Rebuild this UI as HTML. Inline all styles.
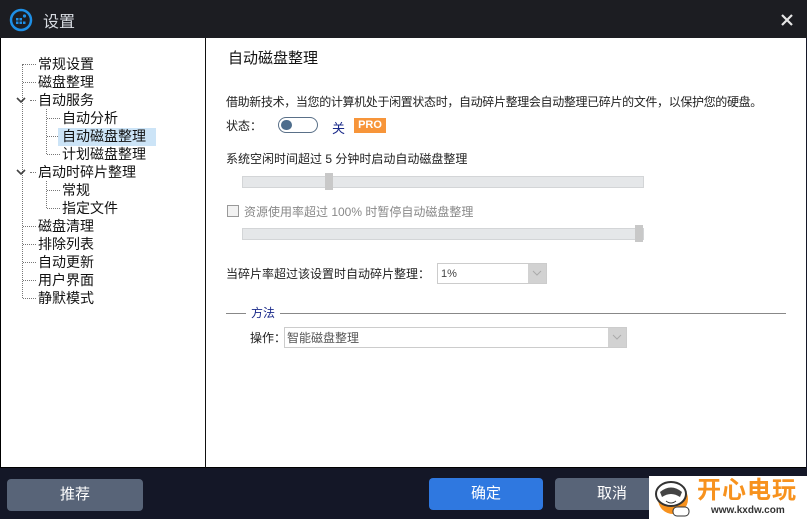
<!DOCTYPE html>
<html><head><meta charset="utf-8"><style>
*{margin:0;padding:0;box-sizing:border-box}
body{width:807px;height:519px;overflow:hidden;background:#141727;font-family:"Liberation Sans","Noto Sans CJK SC",sans-serif;position:relative}
.a{position:absolute;white-space:nowrap}
#tb{left:0;top:0;width:807px;height:38px;background:#1c1d22}
#main{left:0;top:38px;width:806px;height:430px;background:#fff;border-left:1px solid #000;border-bottom:1px solid #000}
#sep{left:205px;top:38px;width:1px;height:430px;background:#111}
.t{font-size:14px;color:#111;line-height:18px}
.r{font-size:12px;color:#222;line-height:16px}
.dv{border-left:1px dotted #777}
.dh{border-top:1px dotted #777;height:0}
.btn{height:32px;border-radius:4px;color:#fff;font-size:15px;text-align:center;line-height:32px}
</style></head><body>
<div class="a" id="tb"></div>
<svg class="a" style="left:9px;top:8px" width="24" height="24" viewBox="0 0 24 24"><circle cx="12" cy="12" r="10" fill="none" stroke="#1e8fe6" stroke-width="2.5"/><g fill="#1e8fe6"><rect x="7" y="10" width="2.5" height="2.5"/><rect x="10.5" y="10" width="2.5" height="2.5"/><rect x="7" y="13.5" width="2.5" height="2.5"/><rect x="10.5" y="13.5" width="2.5" height="2.5"/><rect x="14" y="13.5" width="2.5" height="2.5"/><circle cx="15.5" cy="8" r="1.6"/></g></svg>
<div class="a" style="left:43px;top:8px;font-size:16px;color:#d8dce2">设置</div>
<svg class="a" style="left:780px;top:13px" width="14" height="14"><path d="M2 2L12 12M12 2L2 12" stroke="#e6e6e6" stroke-width="2.2"/></svg>
<div class="a" id="main"></div>
<div class="a" id="sep"></div>
<div class="a dv" style="left:22px;top:64px;height:234px"></div>
<div class="a dv" style="left:46px;top:109px;height:45px"></div>
<div class="a dv" style="left:46px;top:181px;height:27px"></div>
<div class="a dh" style="left:23px;top:64px;width:13px"></div>
<div class="a dh" style="left:23px;top:82px;width:13px"></div>
<div class="a dh" style="left:30px;top:100px;width:6px"></div>
<div class="a dh" style="left:47px;top:118px;width:13px"></div>
<div class="a dh" style="left:47px;top:136px;width:11px"></div>
<div class="a dh" style="left:47px;top:154px;width:13px"></div>
<div class="a dh" style="left:30px;top:172px;width:6px"></div>
<div class="a dh" style="left:47px;top:190px;width:13px"></div>
<div class="a dh" style="left:47px;top:208px;width:13px"></div>
<div class="a dh" style="left:23px;top:226px;width:13px"></div>
<div class="a dh" style="left:23px;top:244px;width:13px"></div>
<div class="a dh" style="left:23px;top:262px;width:13px"></div>
<div class="a dh" style="left:23px;top:280px;width:13px"></div>
<div class="a dh" style="left:23px;top:298px;width:13px"></div>
<svg class="a" style="left:16px;top:96px" width="10" height="8"><path d="M1 2L5 6L9 2" stroke="#444" stroke-width="1.6" fill="none"/></svg>
<svg class="a" style="left:16px;top:168px" width="10" height="8"><path d="M1 2L5 6L9 2" stroke="#444" stroke-width="1.6" fill="none"/></svg>
<div class="a" style="left:58px;top:128px;width:98px;height:18px;background:#cce4f7"></div>
<div class="a t" style="left:38px;top:55px">常规设置</div>
<div class="a t" style="left:38px;top:73px">磁盘整理</div>
<div class="a t" style="left:38px;top:91px">自动服务</div>
<div class="a t" style="left:62px;top:109px">自动分析</div>
<div class="a t" style="left:62px;top:127px">自动磁盘整理</div>
<div class="a t" style="left:62px;top:145px">计划磁盘整理</div>
<div class="a t" style="left:38px;top:163px">启动时碎片整理</div>
<div class="a t" style="left:62px;top:181px">常规</div>
<div class="a t" style="left:62px;top:199px">指定文件</div>
<div class="a t" style="left:38px;top:217px">磁盘清理</div>
<div class="a t" style="left:38px;top:235px">排除列表</div>
<div class="a t" style="left:38px;top:253px">自动更新</div>
<div class="a t" style="left:38px;top:271px">用户界面</div>
<div class="a t" style="left:38px;top:289px">静默模式</div>
<div class="a" style="left:228px;top:47px;font-size:15px;color:#111">自动磁盘整理</div>
<div class="a r" style="left:226px;top:94px;letter-spacing:-0.35px">借助新技术，当您的计算机处于闲置状态时，自动碎片整理会自动整理已碎片的文件，以保护您的硬盘。</div>
<div class="a r" style="left:226px;top:118px">状态：</div>
<div class="a" style="left:278px;top:117px;width:40px;height:16px;border:1.5px solid #5a7088;border-radius:8px"></div>
<div class="a" style="left:281px;top:120px;width:11px;height:10px;border-radius:5px;background:#4e6d8c"></div>
<div class="a" style="left:332px;top:118px;font-size:13px;color:#1a2a8a">关</div>
<div class="a" style="left:354px;top:118px;width:32px;height:15px;background:#f7953a;color:#fff;font-size:11px;font-weight:bold;text-align:center;line-height:15px">PRO</div>
<div class="a r" style="left:226px;top:151px">系统空闲时间超过 5 分钟时启动自动磁盘整理</div>
<div class="a" style="left:242px;top:176px;width:402px;height:12px;background:#e5e7e9;border:1px solid #d3d5d7"></div>
<div class="a" style="left:325px;top:173px;width:8px;height:17px;background:#c8c8c8"></div>
<div class="a" style="left:227px;top:205px;width:12px;height:12px;border:1px solid #999;background:#f2f2f2"></div>
<div class="a r" style="left:244px;top:204px;color:#888">资源使用率超过 100% 时暂停自动磁盘整理</div>
<div class="a" style="left:242px;top:228px;width:402px;height:12px;background:#e5e7e9;border:1px solid #d3d5d7"></div>
<div class="a" style="left:635px;top:225px;width:8px;height:17px;background:#c8c8c8"></div>
<div class="a r" style="left:226px;top:266px">当碎片率超过该设置时自动碎片整理：</div>
<div class="a" style="left:437px;top:263px;width:110px;height:21px;border:1px solid #ccc;background:#fff"></div>
<div class="a" style="left:528px;top:264px;width:18px;height:19px;background:#d2d2d2"></div>
<div class="a r" style="left:441px;top:266px;font-size:11px;color:#444">1%</div>
<svg class="a" style="left:531px;top:270px" width="12" height="7"><path d="M2 1L6 5L10 1" stroke="#aaa" fill="none"/></svg>
<div class="a" style="left:226px;top:313px;width:20px;height:1px;background:#888"></div>
<div class="a" style="left:280px;top:313px;width:506px;height:1px;background:#888"></div>
<div class="a r" style="left:251px;top:305px;color:#1a2a8a;font-size:12px">方法</div>
<div class="a r" style="left:250px;top:330px">操作：</div>
<div class="a" style="left:284px;top:327px;width:343px;height:21px;border:1px solid #ccc;background:#fff"></div>
<div class="a" style="left:608px;top:328px;width:18px;height:19px;background:#d2d2d2"></div>
<div class="a r" style="left:287px;top:330px;color:#555">智能磁盘整理</div>
<svg class="a" style="left:611px;top:334px" width="12" height="7"><path d="M2 1L6 5L10 1" stroke="#aaa" fill="none"/></svg>
<div class="a btn" style="left:7px;top:479px;width:136px;background:#586478">推荐</div>
<div class="a btn" style="left:429px;top:478px;width:114px;background:#2f78e0">确定</div>
<div class="a btn" style="left:555px;top:478px;width:114px;background:#586478">取消</div>
<div class="a" style="left:649px;top:476px;width:158px;height:43px;background:#fff"></div>
<svg class="a" style="left:651px;top:477px" width="44" height="42"><circle cx="22" cy="22" r="15" fill="#f7921e"/><ellipse cx="20" cy="17" rx="15" ry="12" fill="#fff" stroke="#333" stroke-width="2"/><path d="M9 15Q20 6 31 15L29 20Q20 14 11 20Z" fill="#444"/><path d="M15 24Q20 28 25 24" stroke="#333" fill="none"/><rect x="22" y="30" width="16" height="9" rx="4" fill="#fff" stroke="#333"/></svg>
<div class="a" style="left:697px;top:476px;font-size:24px;font-weight:bold;color:#f7921e;letter-spacing:1px;line-height:30px">开心电玩</div>
<div class="a" style="left:711px;top:505px;font-size:10px;font-weight:bold;color:#333;line-height:12px">www.kxdw.com</div>
</body></html>
